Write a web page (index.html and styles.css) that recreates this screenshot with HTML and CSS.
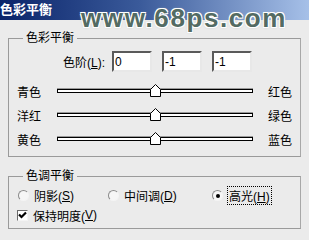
FILE: index.html
```html
<!DOCTYPE html>
<html>
<head>
    <title>色彩平衡</title>
    <link rel="stylesheet" href="styles.css">
</head>
<body>
    <div class="titlebar">色彩平衡</div>
    <div class="watermark">www.68ps.com</div>

    <div class="dialog">
        <fieldset class="group balance">
            <legend>色彩平衡</legend>
            <div class="levels">
                <label for="lv1">色阶(<u>L</u>):</label>
                <input class="field" type="text" id="lv1" value="0">
                <input class="field" type="text" id="lv2" value="-1">
                <input class="field" type="text" id="lv3" value="-1">
            </div>

            <div class="slider-row">
                <span>青色</span>
                <div class="track">
                    <svg class="thumb" width="11" height="13" viewBox="0 0 11 13"><path d="M0.5 5.5 L5.5 0.5 L10.5 5.5 L10.5 12.5 L0.5 12.5 Z" fill="#fff" stroke="#000"/></svg>
                </div>
                <span class="right">红色</span>
            </div>
            <div class="slider-row">
                <span>洋红</span>
                <div class="track">
                    <svg class="thumb" width="11" height="13" viewBox="0 0 11 13"><path d="M0.5 5.5 L5.5 0.5 L10.5 5.5 L10.5 12.5 L0.5 12.5 Z" fill="#fff" stroke="#000"/></svg>
                </div>
                <span class="right">绿色</span>
            </div>
            <div class="slider-row">
                <span>黄色</span>
                <div class="track">
                    <svg class="thumb" width="11" height="13" viewBox="0 0 11 13"><path d="M0.5 5.5 L5.5 0.5 L10.5 5.5 L10.5 12.5 L0.5 12.5 Z" fill="#fff" stroke="#000"/></svg>
                </div>
                <span class="right">蓝色</span>
            </div>
        </fieldset>

        <fieldset class="group tone">
            <legend>色调平衡</legend>
            <div class="radios">
                <span class="opt"><i class="radio"></i>阴影(<u>S</u>)</span>
                <span class="opt"><i class="radio"></i>中间调(<u>D</u>)</span>
                <span class="opt"><i class="radio on"></i><span class="focus">高光(<u>H</u>)</span></span>
            </div>
            <div class="check-row">
                <i class="check"><svg width="9" height="9" viewBox="0 0 9 9"><path d="M1 3.5 L3.5 6 L8 1.5" fill="none" stroke="#000" stroke-width="2.2"/></svg></i>
                保持明度(<u>V</u>)
            </div>
        </fieldset>
    </div>
</body>
</html>
```

FILE: styles.css
```css
body {
    margin: 0;
    width: 309px;
    height: 240px;
    overflow: hidden;
    position: relative;
    background-color: #ebebeb;
    font-family: "Liberation Sans", "Noto Sans CJK SC", sans-serif;
    font-size: 12px;
    color: #000;
}
.titlebar {
    height: 20px;
    line-height: 20px;
    background: linear-gradient(to right, #0a246a, #3a5a9a 45%, #a6c0e8);
    color: #fff;
    font-weight: bold;
    font-size: 13px;
}
.watermark {
    position: absolute;
    left: 81px;
    top: 5px;
    font-size: 26px;
    line-height: 26px;
    font-weight: bold;
    letter-spacing: 1.6px;
    color: #536b63;
    text-shadow: 1px 1px 0 #fff, -1px -1px 0 #fff, 1px -1px 0 #fff, -1px 1px 0 #fff,
                 0 0 3px #a8b4ae;
}
.dialog {
    padding: 11px 8px 0;
}
.group {
    margin: 0;
    padding: 6px 0 5px;
    border: 1px solid #9a9a9a;
    border-right-color: #a8a8a8;
}
.group legend {
    margin-left: 14px;
    padding: 0 3px;
    line-height: 14px;
}
.tone {
    margin-top: 12px;
    padding: 4px 0 5px;
}
.levels {
    display: flex;
    align-items: center;
    height: 21px;
}
.levels label {
    width: 96px;
    text-align: right;
    margin-right: 7px;
}
.field {
    box-sizing: border-box;
    width: 40px;
    height: 21px;
    margin: 0 10px 0 0;
    padding: 0 1px;
    font-family: "Liberation Sans", sans-serif;
    font-size: 12px;
    background-color: #fff;
    border: 2px solid;
    border-color: #5a5a5a #e8e8e8 #e8e8e8 #5a5a5a;
    outline: none;
}
.slider-row {
    display: grid;
    grid-template-columns: 40px 196px auto;
    align-items: center;
    height: 24px;
    padding-left: 8px;
}
.levels + .slider-row {
    margin-top: 7px;
}
.slider-row .right {
    margin-left: 15px;
}
.track {
    position: relative;
    height: 2px;
    background-color: #fff;
    border: 1px solid #000;
    box-shadow: 0 -1px 0 #9a9a9a;
}
.thumb {
    position: absolute;
    left: 92px;
    top: -6px;
    display: block;
}
.radios {
    display: grid;
    grid-template-columns: 90px 104px auto;
    align-items: center;
    height: 16px;
    padding-left: 9px;
}
.opt {
    display: flex;
    align-items: center;
}
.radio {
    box-sizing: border-box;
    width: 11px;
    height: 11px;
    margin-right: 5px;
    border-radius: 50%;
    border: 1px solid;
    border-color: #8a8a8a #f4f4f4 #f4f4f4 #8a8a8a;
    background-color: #f6f6f6;
    position: relative;
}
.radio.on::after {
    content: "";
    position: absolute;
    left: 2.5px;
    top: 2.5px;
    width: 4px;
    height: 4px;
    border-radius: 50%;
    background-color: #000;
}
.focus {
    outline: 1px dotted #000;
    outline-offset: 0;
    padding: 0 1px;
}
.check-row {
    display: flex;
    align-items: center;
    height: 16px;
    margin-top: 4px;
    padding-left: 8px;
}
.check {
    box-sizing: border-box;
    width: 11px;
    height: 11px;
    margin-right: 5px;
    border: 1px solid;
    border-color: #6a6a6a #f4f4f4 #f4f4f4 #6a6a6a;
    background-color: #fff;
    display: flex;
    align-items: center;
    justify-content: center;
}
```
